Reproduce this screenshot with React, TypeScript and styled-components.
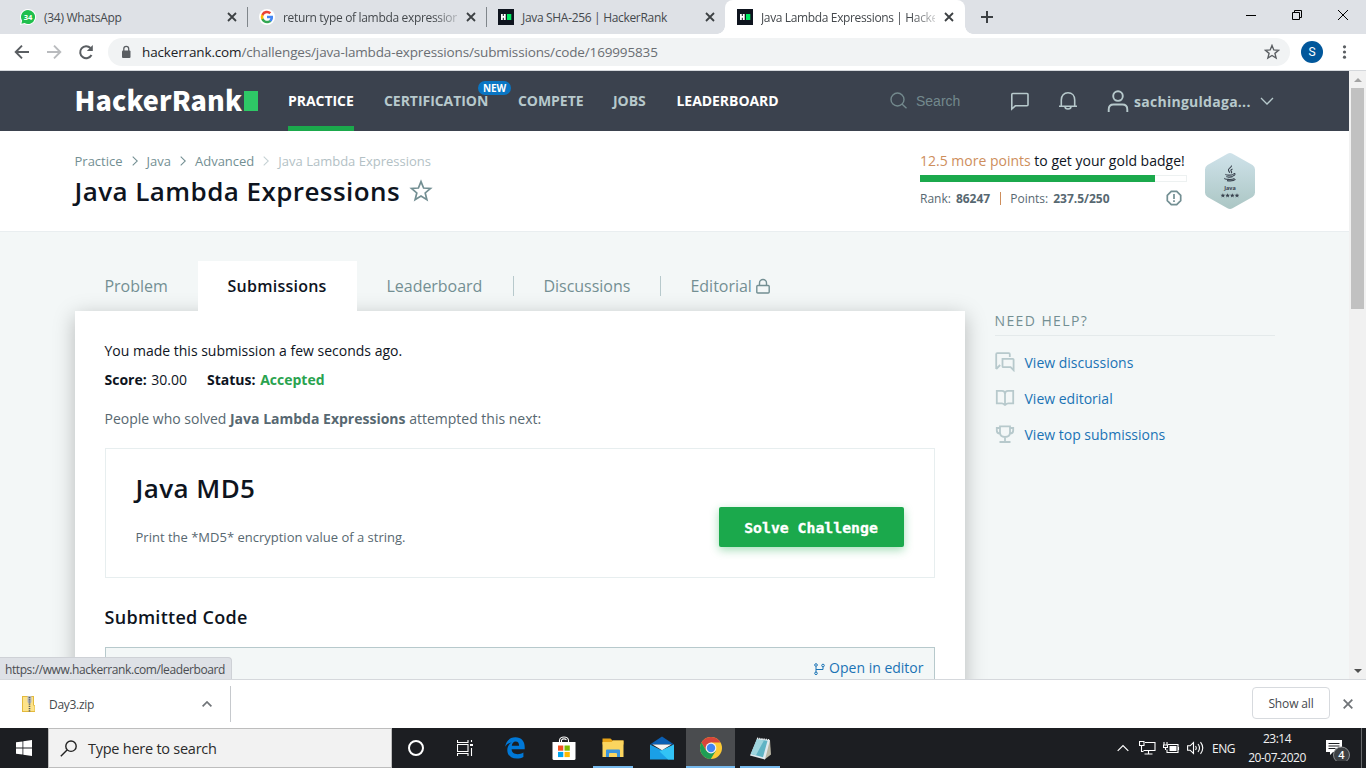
import React from "react";
import styled, { createGlobalStyle } from "styled-components";

const Global = createGlobalStyle`
  * { box-sizing: border-box; }
  body { margin: 0; overflow: hidden; font-family: "Open Sans", "Noto Sans", sans-serif; }
  svg { display: block; flex: none; }
`;

const Window = styled.div`
  width: 1366px;
  height: 768px;
  display: flex;
  flex-direction: column;
  overflow: hidden;
  background: #fff;
`;

const Txt = styled.span<{ $s?: number; $ls?: number; $w?: number; $c?: string }>`
  font-size: ${(p) => p.$s ?? 14}px;
  letter-spacing: ${(p) => p.$ls ?? 0}px;
  font-weight: ${(p) => p.$w ?? 400};
  color: ${(p) => p.$c ?? "inherit"};
  white-space: nowrap;
`;

/* ---------- browser chrome ---------- */

const TabStrip = styled.div`
  height: 34px;
  flex: none;
  display: flex;
  padding-left: 8px;
  background: #dee1e6;
`;

const BrowserTab = styled.div<{ $active?: boolean; $line?: boolean }>`
  position: relative;
  width: ${(p) => (p.$active ? 240 : 239)}px;
  height: 34px;
  display: flex;
  align-items: center;
  gap: 8px;
  padding: 0 ${(p) => (p.$active ? 8 : 7)}px 0 12px;
  color: #45494d;
  background: ${(p) => (p.$active ? "#fff" : "transparent")};
  border-radius: 8px 8px 0 0;
  &::before, &::after {
    content: "";
    display: ${(p) => (p.$active ? "block" : "none")};
    position: absolute;
    bottom: 0;
    width: 8px;
    height: 8px;
  }
  &::before { left: -8px; background: radial-gradient(circle at 0 0, #dee1e6 7.5px, #fff 8px); }
  &::after {
    right: ${(p) => (p.$line ? -1 : -8)}px;
    bottom: ${(p) => (p.$line ? 7 : 0)}px;
    display: ${(p) => (p.$active || p.$line ? "block" : "none")};
    width: ${(p) => (p.$line ? 1 : 8)}px;
    height: ${(p) => (p.$line ? 20 : 8)}px;
    background: ${(p) => (p.$line ? "#80868b" : "radial-gradient(circle at 100% 0, #dee1e6 7.5px, #fff 8px)")};
  }
`;

const TabTitle = styled.div<{ $fade?: boolean }>`
  flex: 1;
  min-width: 0;
  line-height: 18px;
  margin-right: -2px;
  ${(p) => p.$fade && "mask-image: linear-gradient(90deg, #000 150px, transparent 182px);"}
`;

const NewTab = styled.div`
  width: 28px;
  margin-left: 8px;
  display: flex;
  align-items: center;
  justify-content: center;
`;

const WinControls = styled.div`
  margin-left: auto;
  height: 29px;
  display: flex;
`;

const WinButton = styled.div`
  width: 46px;
  display: flex;
  align-items: center;
  justify-content: center;
`;

const Toolbar = styled.div`
  height: 37px;
  flex: none;
  display: flex;
  align-items: center;
  padding: 0 12px 0 14px;
  border-bottom: 1px solid #d5d8dc;
  background: #fff;
`;

const NavButtons = styled.div`
  display: flex;
  gap: 16px;
  width: 94px;
`;

const Omnibox = styled.div`
  width: 1182px;
  height: 28px;
  display: flex;
  align-items: center;
  padding: 0 10px 0 10px;
  border-radius: 14px;
  background: #f1f3f4;
  color: #6a6e73;
  b { font-weight: 400; color: #202124; }
`;

const UrlText = styled.div`
  flex: 1;
  margin-left: 8px;
  font-size: 13.5px;
  letter-spacing: -0.145px;
`;

const Avatar = styled.div`
  width: 22px;
  height: 22px;
  margin: 0 11px;
  border-radius: 50%;
  background: #01579b;
  color: #fff;
  font: 12px/22px Roboto, sans-serif;
  text-align: center;
`;

const Content = styled.div`
  position: relative;
  height: 608px;
  flex: none;
  display: flex;
  overflow: hidden;
`;

const Page = styled.div`
  width: 1349px;
  background: #f3f7f7;
  overflow: hidden;
`;

const Scrollbar = styled.div`
  width: 17px;
  display: flex;
  flex-direction: column;
  align-items: center;
  background: #f1f1f1;
`;

const ScrollArrow = styled.div`
  height: 17px;
  display: flex;
  align-items: center;
`;

const ScrollTrack = styled.div`
  flex: 1;
`;

const Thumb = styled.div`
  width: 13px;
  height: 221px;
  background: #c1c1c1;
`;

const StatusBubble = styled.div`
  position: absolute;
  left: -1px;
  bottom: 0;
  width: 233px;
  height: 22px;
  padding-left: 5px;
  line-height: 21px;
  background: #dee1e6;
  border: 1px solid #ced1d6;
  border-bottom: 0;
  border-radius: 0 4px 0 0;
  color: #4a4d51;
`;

/* ---------- site header ---------- */

const SiteNav = styled.div`
  height: 60px;
  display: flex;
  align-items: stretch;
  padding: 0 75px 0 74.5px;
  background: #3b424e;
`;

const Logo = styled.div`
  width: 213.5px;
  display: flex;
  align-items: center;
  color: #fff;
  font: 900 27px/30px "Noto Sans CJK SC", "Open Sans", sans-serif;
  letter-spacing: 0.1px;
`;

const LogoWord = styled.div`
  width: 169.5px;
  padding-bottom: 2px;
  white-space: nowrap;
`;

const LogoBlock = styled.div`
  width: 14px;
  height: 20px;
  background: #2ec866;
`;

const NavLink = styled.div<{ $on?: boolean; $current?: boolean; $w: number }>`
  position: relative;
  width: ${(p) => p.$w}px;
  margin-right: 30px;
  line-height: 60px;
  font-size: 14px;
  font-weight: 700;
  letter-spacing: -0.05px;
  white-space: nowrap;
  color: ${(p) => (p.$on ? "#fff" : "#b7c9cc")};
  box-shadow: ${(p) => (p.$current ? "inset 0 -5px #1ba94c" : "none")};
`;

const NewBadge = styled.span`
  position: absolute;
  right: -23px;
  top: 10px;
  width: 33px;
  height: 14px;
  border-radius: 7px;
  background: #0a76c4;
  color: #fff;
  font-size: 10px;
  font-weight: 700;
  line-height: 14px;
  text-align: center;
`;

const NavRight = styled.div`
  margin-left: auto;
  display: flex;
  align-items: center;
  color: #b7c9cc;
`;

const SearchBox = styled.div`
  width: 120px;
  display: flex;
  align-items: center;
  gap: 9px;
  color: #73898d;
  font: 14px "Liberation Sans", sans-serif;
  svg { margin-top: -2px; }
`;

const NavIcon = styled.div<{ $w: number }>`
  width: ${(p) => p.$w}px;
`;

const UserName = styled.div`
  width: 126px;
  margin-left: 5px;
  font-size: 14px;
  font-weight: 700;
  letter-spacing: 0.27px;
`;

const TitleBar = styled.div`
  height: 100px;
  display: flex;
  justify-content: space-between;
  padding: 0 94px 0 74.5px;
  background: #fff;
  box-shadow: 0 1px 0 #e9eef0;
`;

const TitleBlock = styled.div`
  padding-top: 20px;
`;

const Crumbs = styled.div`
  height: 20px;
  display: flex;
  align-items: center;
  font-size: 13px;
  color: #738f93;
  svg { margin: 0 9px; }
`;

const TitleRow = styled.div`
  display: flex;
  align-items: center;
  gap: 9px;
  height: 40px;
  color: #0e141e;
`;

const Progress = styled.div`
  display: flex;
  gap: 18px;
  padding-top: 19px;
`;

const ProgressInfo = styled.div`
  width: 267px;
`;

const ProgressText = styled.div`
  height: 20px;
  line-height: 20px;
  color: #0e141e;
`;

const Bar = styled.div`
  height: 7px;
  margin-top: 5px;
  border: 1px solid #edf1f1;
  background: #fff;
`;

const BarFill = styled.div`
  width: 235px;
  height: 7px;
  margin: -1px 0 0 -1px;
  background: #1ba94c;
`;

const Stats = styled.div`
  height: 20px;
  margin-top: 6px;
  display: flex;
  align-items: center;
  font-size: 12px;
  color: #576871;
  b { margin-left: 5px; }
  i { width: 1px; height: 13px; margin: 0 9px 0 10px; background: #ce8e5c; }
  svg { margin: 0 5px 0 auto; }
`;

const Hex = styled.div`
  margin-top: 3px;
  width: 50px;
  height: 56px;
`;

/* ---------- main ---------- */

const Main = styled.div`
  display: flex;
  gap: 30px;
  padding: 30px 74px 0 74.5px;
`;

const Left = styled.div`
  width: 890px;
`;

const PageTabs = styled.div`
  position: relative;
  z-index: 1;
  height: 50px;
  display: flex;
  align-items: center;
`;

const PageTab = styled.div<{ $w: number; $active?: boolean; $line?: boolean }>`
  width: ${(p) => p.$w}px;
  height: ${(p) => (p.$active ? 50 : 20)}px;
  display: flex;
  align-items: center;
  gap: 4px;
  padding-left: 30px;
  border-right: ${(p) => (p.$line ? "1px solid #b7c9cc" : "0")};
  background: ${(p) => (p.$active ? "#fff" : "transparent")};
  font-size: 16px;
  font-weight: ${(p) => (p.$active ? 600 : 400)};
  letter-spacing: ${(p) => (p.$active ? 0.25 : -0.03)}px;
  color: ${(p) => (p.$active ? "#0e141e" : "#738f93")};
`;

const Card = styled.div`
  height: 500px;
  padding: 30px;
  background: #fff;
  box-shadow: 0 5px 20px rgba(0, 0, 0, 0.25);
  color: #0e141e;
`;

const Line = styled.div<{ $mt?: number; $c?: string }>`
  height: 20px;
  margin-top: ${(p) => p.$mt ?? 0}px;
  line-height: 20px;
  font-size: 14px;
  white-space: nowrap;
  color: ${(p) => p.$c ?? "inherit"};
  b { font-weight: 700; }
`;

const Field = styled.span`
  margin-right: 20px;
  b { margin-right: 1px; }
`;

const Green = styled.b`
  color: #2aa34f;
`;

const NextBox = styled.div`
  height: 130px;
  margin-top: 19px;
  display: flex;
  justify-content: space-between;
  align-items: flex-start;
  padding: 19px 30px 0 30px;
  border: 1px solid #e7eeef;
`;

const NextTitle = styled.div`
  height: 40px;
  line-height: 40px;
`;

const NextDesc = styled.div`
  margin-top: 19px;
  line-height: 20px;
  font-size: 13px;
  color: #576871;
`;

const SolveButton = styled.div`
  width: 185px;
  height: 40px;
  margin-top: 39px;
  border-radius: 2px;
  background: #1ba94c;
  box-shadow: 0 3px 10px rgba(27, 169, 76, 0.4);
  color: #fff;
  font: 700 14.8px/41px "DejaVu Sans Mono", monospace;
  -webkit-text-stroke: 0.3px #fff;
  text-align: center;
`;

const SectionTitle = styled.div`
  height: 30px;
  margin-top: 24px;
  line-height: 30px;
  font-size: 18px;
  font-weight: 600;
  letter-spacing: 0.28px;
`;

const CodeBox = styled.div`
  height: 120px;
  margin-top: 15px;
  padding: 10px 10px;
  display: flex;
  justify-content: flex-end;
  gap: 4px;
  border: 1px solid #b7c9cc;
  background: #f3f7f7;
  color: #1a73b5;
  line-height: 20px;
  font-size: 14px;
  svg { margin-top: 5px; }
`;

const Side = styled.div`
  width: 280px;
  padding-top: 50px;
`;

const SideTitle = styled.div`
  height: 25px;
  line-height: 20px;
  border-bottom: 1px solid #e4eaeb;
  font-size: 14px;
  letter-spacing: 1.4px;
  color: #738f93;
`;

const SideLinks = styled.div`
  padding-top: 16px;
  display: flex;
  flex-direction: column;
  gap: 16px;
`;

const SideLink = styled.div`
  height: 20px;
  display: flex;
  align-items: center;
  gap: 10px;
  font-size: 14px;
  color: #1a73b5;
  svg { color: #b7c9cc; }
`;

/* ---------- downloads + taskbar ---------- */

const Downloads = styled.div`
  height: 49px;
  flex: none;
  display: flex;
  align-items: center;
  padding: 0 13px 0 22px;
  border-top: 1px solid #d5d8dc;
  background: #fff;
  color: #45494d;
`;

const DownloadItem = styled.div`
  width: 209px;
  height: 36px;
  display: flex;
  align-items: center;
  gap: 14px;
  border-right: 1px solid #c6c9cd;
  svg:last-child { margin: 0 18px 0 auto; }
`;

const ShowAll = styled.div`
  width: 78px;
  height: 32px;
  margin: -2px 13px 0 auto;
  border: 1px solid #d7dade;
  border-radius: 4px;
  line-height: 29px;
  text-align: center;
`;

const Taskbar = styled.div`
  height: 40px;
  flex: none;
  display: flex;
  background: #1c1e22;
  color: #f2f2f2;
`;

const TaskButton = styled.div<{ $w?: number; $bar?: number; $hot?: boolean }>`
  width: ${(p) => p.$w ?? 49}px;
  height: 40px;
  display: flex;
  align-items: center;
  justify-content: center;
  background: ${(p) => (p.$hot ? "#4a4c4f" : "transparent")};
  background-image: ${(p) => (p.$bar ? "linear-gradient(#76b9ed, #76b9ed)" : "none")};
  background-size: ${(p) => p.$bar ?? 0}px 2px;
  background-repeat: no-repeat;
  background-position: center bottom;
`;

const TaskSearch = styled.div`
  width: 344px;
  height: 40px;
  display: flex;
  align-items: center;
  gap: 11px;
  padding-left: 11px;
  border: 1px solid #bdbdbd;
  background: #f2f2f2;
  color: #2b2b2b;
`;

const Tray = styled.div`
  margin-left: auto;
  display: flex;
  align-items: center;
  padding-right: 4px;
`;

const TraySlot = styled.div<{ $w: number; $pr?: number }>`
  width: ${(p) => p.$w}px;
  height: 40px;
  padding-right: ${(p) => p.$pr ?? 0}px;
  display: flex;
  align-items: center;
  justify-content: center;
`;

const Clock = styled.div`
  width: 76px;
  text-align: center;
  line-height: 19px;
  font-size: 12px;
  letter-spacing: -0.5px;
`;

const ShowDesktop = styled.div`
  width: 1px;
  height: 40px;
  background: #67696c;
`;

/* ---------- icons ---------- */

const Stroke = ({ w, h = w, vb, d, c = "currentColor", sw = 1.5 }: { w: number; h?: number; vb: string; d: string; c?: string; sw?: number }) => (
  <svg width={w} height={h} viewBox={vb} fill="none" stroke={c} strokeWidth={sw}>
    <path d={d} />
  </svg>
);

const Close = ({ c = "#3c4043", s = 16 }: { c?: string; s?: number }) => (
  <Stroke w={s} vb="0 0 16 16" d="M4 4l8 8M12 4l-8 8" c={c} sw={1.8} />
);

const HrIcon = () => (
  <svg width="16" height="16" viewBox="0 0 16 16">
    <rect width="16" height="16" fill="#0e141e" />
    <path d="M3 5h1.800v2h1V5h1.900v6H5.800V8.800h-1V11H3z" fill="#fff" />
    <rect x="9" y="5" width="4.300" height="6" fill="#00ea64" />
  </svg>
);

const WhatsAppIcon = () => (
  <svg width="16" height="16" viewBox="0 0 16 16">
    <path d="M8 0a8 8 0 1 1-3.600 15.100L0 16l1-4.200A8 8 0 0 1 8 0z" fill="#fff" />
    <path d="M8 1a7 7 0 1 1-3.400 13.100L1.400 14.700l.7-3A7 7 0 0 1 8 1z" fill="#1fbf4d" />
    <text x="8" y="10.800" fontSize="7.500" fontWeight="700" textAnchor="middle" fill="#fff" fontFamily="Open Sans">34</text>
  </svg>
);

const GoogleIcon = () => (
  <svg width="16" height="16" viewBox="-2 -2 28 28">
    <circle cx="12" cy="12" r="14" fill="#fff" />
    <path fill="#4285F4" d="M22.560 12.250c0-.78-.07-1.530-.2-2.250H12v4.260h5.920a5.060 5.060 0 0 1-2.200 3.320v2.770h3.570c2.080-1.920 3.270-4.740 3.270-8.100z" />
    <path fill="#34A853" d="M12 23c2.970 0 5.460-.98 7.280-2.660l-3.570-2.770c-.98.66-2.230 1.060-3.710 1.060-2.860 0-5.290-1.930-6.160-4.530H2.180v2.840A11 11 0 0 0 12 23z" />
    <path fill="#FBBC05" d="M5.840 14.090a6.600 6.600 0 0 1 0-4.180V7.070H2.180a11 11 0 0 0 0 9.860z" />
    <path fill="#EA4335" d="M12 5.380c1.620 0 3.060.56 4.210 1.640l3.150-3.150A11 11 0 0 0 2.180 7.070l3.660 2.840C6.710 7.310 9.140 5.380 12 5.380z" />
  </svg>
);

const StarPath = "M12 2.600L14.600 9.040L21.500 9.500L16.200 13.960L17.900 20.700L12 17L6.100 20.700L7.800 13.960L2.500 9.500L9.400 9.040z";

const ChevronRight = ({ c = "#738f93" }: { c?: string }) => <Stroke w={6} h={10} vb="0 0 6 10" d="M.7.700L5.300 5 .700 9.300" c={c} sw={1.1} />;

const JavaBadge = () => (
  <svg width="50" height="56" viewBox="0 0 50 56">
    <defs>
      <linearGradient id="hex" x1="0" y1="0" x2="0" y2="1">
        <stop offset="0" stopColor="#cfe2ea" />
        <stop offset="1" stopColor="#abc6c4" />
      </linearGradient>
    </defs>
    <path d="M22.500.800q2.500-1.400 5 0L47.500 12Q50 13.500 50 16.500v23q0 3-2.500 4.500L27.500 55.200q-2.500 1.400-5 0L2.500 44Q0 42.500 0 39.500v-23Q0 13.500 2.500 12z" fill="url(#hex)" />
    <g fill="none" stroke="#39424e" strokeWidth="1.100">
      <path d="M26.500 12.500c.5 2-4 3-3 5 .3.900 1.200 1.200 1 2.400M27.500 16c-2 .8-2 1.600-1 2.600.4.600 0 1.200-.5 1.500M21 21.300c-1.500.9 5 1.200 7.500.1M28.500 20.600c2-.6 2.200 1.500-.5 2.400M21.800 23.200c-.5 1.100 4 1.200 6 .4M20 25.300c-1.800 1 7 1.900 9.500.2M22 27.600c3 .5 7 .1 8.500-1.200" />
    </g>
    <text x="25" y="36.500" fontSize="5.500" fontWeight="700" textAnchor="middle" fill="#39424e" fontFamily="Open Sans">Java</text>
    {[17.9, 22.6, 27.3, 32].map((x) => (
      <path key={x} transform={`translate(${x} 42.500)`} d="M0-2.300l.65 1.500 1.600.1-1.200 1.100.4 1.600L0 1.100-1.450 2l.4-1.600L-2.250-.7l1.600-.1z" fill="#39424e" />
    ))}
  </svg>
);

const ZipIcon = () => (
  <svg width="13" height="16" viewBox="0 0 13 16">
    <path d="M0 0h12v9h1v7H0z" fill="#e3b93c" />
    <path d="M1 1h10v14H1z" fill="#fde38a" />
    <path d="M5.500 0h4v6l-1 1.500h-2L5.500 6z" fill="#b9bcc0" />
    <path d="M7.500 1v15" stroke="#55595e" strokeWidth="1.600" strokeDasharray="1.200 1" />
    <path d="M11 9.500h1.500v5.500H11z" fill="#fde38a" />
  </svg>
);

const EdgeIcon = () => (
  <svg width="20" height="22" viewBox="0 0 20 22">
    <path fill="#0078d7" d="M.2 9.800C1 4.200 4.700.300 10.400.300c6 0 9.300 4.200 9.300 9.600v2.400H6.600c.2 3.300 2.700 4.900 6 4.900 2.200 0 4.200-.6 5.800-1.600v4.500c-1.900 1-4.200 1.500-6.600 1.500-5.800 0-9.500-3.300-9.500-8.700 0-3.400 1.900-6.100 4.700-7.700C3.600 5.900 1.600 7.400.200 9.800zM6.800 8.700h7.300c0-2.500-1.200-4.100-3.400-4.100S7.100 6.300 6.800 8.700z" />
  </svg>
);

const StoreIcon = () => (
  <svg width="24" height="25" viewBox="0 0 24 25">
    <path d="M7.500 7V4.500a4.500 3.500 0 0 1 9 0V7M9.500 7V4a3.400 3.400 0 0 1 5 0" fill="none" stroke="#fff" strokeWidth="1.100" />
    <path d="M.5 6h23v16.500a1.500 1.500 0 0 1-1.500 1.500H2a1.500 1.500 0 0 1-1.500-1.500z" fill="#fff" />
    <path d="M6 9.500h5.300v5.200H6z" fill="#f25022" />
    <path d="M12.500 9.500h5.300v5.200h-5.300z" fill="#7fba00" />
    <path d="M6 15.900h5.300v5.200H6z" fill="#00a4ef" />
    <path d="M12.500 15.900h5.300v5.200h-5.300z" fill="#ffb900" />
  </svg>
);

const ExplorerIcon = () => (
  <svg width="22" height="20" viewBox="0 0 22 20">
    <path d="M.5.500h8l2 2h11v4H.500z" fill="#e8a317" />
    <path d="M.5 4h9l1.500-1.500h10.500v16.500H.500z" fill="#fbd55f" />
    <path d="M4 19v-6.500q0-1 1-1h12q1 0 1 1V19h-3v-3q0-1-1-1H8q-1 0-1 1v3z" fill="#3a94dc" />
  </svg>
);

const MailIcon = () => (
  <svg width="24" height="24" viewBox="0 0 24 24">
    <path d="M0 8.500L12 .5l12 8z" fill="#0a5fb4" />
    <path d="M0 8.500l12 6L24 8.500V23.500H0z" fill="#1a9fe6" />
    <path d="M24 8.500v15H18L9.500 15.500z" fill="#32c3f5" />
    <path d="M2.500 8.500h19L12 14.300z" fill="#f5f5f5" />
  </svg>
);

const ChromeIcon = () => (
  <svg width="22" height="22" viewBox="0 0 22 22">
    <circle cx="11" cy="11" r="11" fill="#fcc934" />
    <path d="M1.470 5.500A11 11 0 0 1 20.530 5.500H11L6.200 13.700z" fill="#d8453a" />
    <path d="M1.470 5.500A11 11 0 0 0 10.800 22L15.800 13.700H6.200z" fill="#1e9d55" />
    <circle cx="11" cy="11" r="5.400" fill="#f1f1f1" />
    <circle cx="11" cy="11" r="4.200" fill="#4285f4" />
  </svg>
);

const NotepadIcon = () => (
  <svg width="23" height="23" viewBox="0 0 23 23">
    <path d="M8 2.500L21 3.500l1 14-6.500 5z" fill="#b9b6a4" />
    <path d="M8 1.500l13 1.500-5 19.500L1 18.500z" fill="#dfe9ee" />
    <path d="M8 2.500l10.500 1.200-4.500 16.500L2 17z" fill="#5fb3c4" />
    <path d="M8 2.500l7 .8L7 18.300 2 17z" fill="#9fd5de" />
    <path d="M8 1.300l13 1.600" stroke="#e9eef0" strokeWidth="1.500" strokeDasharray="1.200 1" />
  </svg>
);

/* ---------- data ---------- */

const browserTabs = [
  { title: "(34) WhatsApp", icon: <WhatsAppIcon />, line: true, ls: -0.28 },
  { title: "return type of lambda expression", icon: <GoogleIcon />, line: true, fade: true, ls: -0.33 },
  { title: "Java SHA-256 | HackerRank", icon: <HrIcon />, ls: -0.32 },
  { title: "Java Lambda Expressions | Hacke", icon: <HrIcon />, active: true, fade: true, ls: -0.36 },
];

export default function App() {
  return (
    <Window>
      <Global />
      <TabStrip>
        {browserTabs.map((t) => (
          <BrowserTab key={t.title} $active={t.active} $line={t.line}>
            {t.icon}
            <TabTitle $fade={t.fade}>
              <Txt $s={12} $ls={t.ls}>{t.title}</Txt>
            </TabTitle>
            <Close />
          </BrowserTab>
        ))}
        <NewTab><Stroke w={14} vb="0 0 14 14" d="M7 1v12M1 7h12" c="#3c4043" sw={2} /></NewTab>
        <WinControls>
          <WinButton><Stroke w={10} vb="0 0 10 10" d="M0 5.500h10" c="#000" sw={1} /></WinButton>
          <WinButton><Stroke w={10} vb="0 0 10 10" d="M.5 2.500h7v7h-7zM2.500 2.500v-2h7v7h-2" c="#000" sw={1} /></WinButton>
          <WinButton><Stroke w={10} vb="0 0 10 10" d="M0 0l10 10M10 0L0 10" c="#000" sw={1} /></WinButton>
        </WinControls>
      </TabStrip>

      <Toolbar>
        <NavButtons>
          <Stroke w={16} vb="0 0 16 16" d="M15 8H2.500M8 1.700L1.700 8 8 14.300" c="#5a5e62" sw={1.9} />
          <Stroke w={16} vb="0 0 16 16" d="M1 8h12.500M8 1.700L14.300 8 8 14.300" c="#b9bbbe" sw={1.9} />
          <svg width="16" height="16" viewBox="0 0 16 16">
            <path d="M13.500 11A6 6 0 1 1 12.500 4" fill="none" stroke="#5a5e62" strokeWidth="2" />
            <path d="M14.800 1v6h-6z" fill="#5a5e62" />
          </svg>
        </NavButtons>
        <Omnibox>
          <svg width="16" height="16" viewBox="0 0 16 16">
            <rect x="4" y="6.500" width="8.500" height="7.500" rx="1" fill="#5a5e62" />
            <path d="M5.800 7V4.800a2.450 2.450 0 0 1 4.900 0V7" fill="none" stroke="#5a5e62" strokeWidth="1.300" />
          </svg>
          <UrlText><b>hackerrank.com</b>/challenges/java-lambda-expressions/submissions/code/169995835</UrlText>
          <Stroke w={16} vb="0.500 0.500 23 23" d={StarPath} c="#5a5e62" sw={2} />
        </Omnibox>
        <Avatar>S</Avatar>
        <svg width="20" height="16" viewBox="0 0 20 16" fill="#5a5e62">
          <circle cx="10.500" cy="2.800" r="1.600" /><circle cx="10.500" cy="8" r="1.600" /><circle cx="10.500" cy="13.200" r="1.600" />
        </svg>
      </Toolbar>

      <Content>
        <Page>
          <SiteNav>
            <Logo><LogoWord>HackerRank</LogoWord><LogoBlock /></Logo>
            <NavLink $w={66} $on $current>PRACTICE</NavLink>
            <NavLink $w={104}>CERTIFICATION<NewBadge>NEW</NewBadge></NavLink>
            <NavLink $w={65}>COMPETE</NavLink>
            <NavLink $w={33.5}>JOBS</NavLink>
            <NavLink $w={102} $on>LEADERBOARD</NavLink>
            <NavRight>
              <SearchBox>
                <Stroke w={17} vb="0 0 17 17" d="M7.500 1a6.500 6.500 0 1 0 0 13a6.500 6.500 0 0 0 0-13zM12.200 12.200l4.300 4" sw={1.4} />
                Search
              </SearchBox>
              <NavIcon $w={48}>
                <Stroke w={20} vb="0 0 20 20" d="M1.800 18V3.500q0-1 1-1H17q1 0 1 1v10.300q0 1-1 1H5.300z" sw={1.6} />
              </NavIcon>
              <NavIcon $w={49}>
                <Stroke w={20} vb="0 0 20 20" d="M1 15.200h18M3.300 15V9C3.300 4.600 6 1.800 10 1.800S16.700 4.600 16.700 9v6M7 15.500c0 3.300 6 3.300 6 0" sw={1.6} />
              </NavIcon>
              <Stroke w={22} h={24} vb="0 0 22 24" d="M11 2.300a4.800 4.800 0 1 0 0 9.600a4.800 4.800 0 0 0 0-9.600zM1.700 23v-2.500q0-5 5-5h8.600q5 0 5 5V23" sw={1.9} />
              <UserName>sachinguldaga...</UserName>
              <Stroke w={14} h={8} vb="0 0 14 8" d="M1 1l6 6 6-6" sw={1.3} />
            </NavRight>
          </SiteNav>

          <TitleBar>
            <TitleBlock>
              <Crumbs>
                Practice<ChevronRight />Java<ChevronRight />Advanced<ChevronRight c="#c5d1d4" />
                <Txt $s={13} $c="#b3c1c5">Java Lambda Expressions</Txt>
              </Crumbs>
              <TitleRow>
                <Txt $s={26} $w={600} $ls={0.43}>Java Lambda Expressions</Txt>
                <Stroke w={24} vb="0 0 24 24" d={StarPath} c="#738f93" sw={1.7} />
              </TitleRow>
            </TitleBlock>
            <Progress>
              <ProgressInfo>
                <ProgressText>
                  <Txt $s={14} $c="#ce8e5c">12.5 more points</Txt>
                  <Txt $s={14}> to get your gold badge!</Txt>
                </ProgressText>
                <Bar><BarFill /></Bar>
                <Stats>
                  Rank: <b>86247</b><i />Points: <b>237.5/250</b>
                  <Stroke w={16} vb="0 0 16 16" d="M5.300 1.300h5.400l4 4v5.400l-4 4H5.300l-4-4V5.300zM8 4v5M8 10.300v1.800" c="#738f93" sw={1.7} />
                </Stats>
              </ProgressInfo>
              <Hex><JavaBadge /></Hex>
            </Progress>
          </TitleBar>

          <Main>
            <Left>
              <PageTabs>
                <PageTab $w={123}>Problem</PageTab>
                <PageTab $w={159} $active>Submissions</PageTab>
                <PageTab $w={157} $line>Leaderboard</PageTab>
                <PageTab $w={147} $line>Discussions</PageTab>
                <PageTab $w={140}>
                  Editorial
                  <Stroke w={14} h={16} vb="0 0 14 16" d="M.8 8.500q0-1 1-1h10.400q1 0 1 1v5.500q0 1-1 1H1.800q-1 0-1-1zM3.500 7.500V5a3.500 3.500 0 0 1 7 0V7.500" sw={1.4} />
                </PageTab>
              </PageTabs>
              <Card>
                <Line>You made this submission a few seconds ago.</Line>
                <Line $mt={9}>
                  <Field><b>Score:</b> 30.00</Field>
                  <Field><b>Status:</b> <Green>Accepted</Green></Field>
                </Line>
                <Line $mt={19} $c="#576871">People who solved <b>Java Lambda Expressions</b> attempted this next:</Line>
                <NextBox>
                  <div>
                    <NextTitle><Txt $s={26} $w={600} $ls={0.43}>Java MD5</Txt></NextTitle>
                    <NextDesc>Print the *MD5* encryption value of a string.</NextDesc>
                  </div>
                  <SolveButton>Solve Challenge</SolveButton>
                </NextBox>
                <SectionTitle>Submitted Code</SectionTitle>
                <CodeBox>
                  <Stroke w={11} h={12} vb="0 0 11 12" d="M2 3.500v6M2 .7a1.300 1.300 0 1 0 0 2.600a1.300 1.300 0 0 0 0-2.600zM2 9a1.300 1.300 0 1 0 0 2.600a1.300 1.300 0 0 0 0-2.600zM9 1.200a1.300 1.300 0 1 0 0 2.600a1.300 1.300 0 0 0 0-2.600zM9 4v2.500H2" sw={1} />
                  Open in editor
                </CodeBox>
              </Card>
            </Left>
            <Side>
              <SideTitle>NEED HELP?</SideTitle>
              <SideLinks>
                <SideLink>
                  <Stroke w={20} vb="0 0 20 20" d="M1.200 17V2.200q0-1 1-1h11.600q1 0 1 1V5M1.200 17l4-4M7.500 6.800h10.300q.8 0 .8.800v10.600l-3-3H8.300q-.8 0-.8-.8z" sw={1.8} />
                  View discussions
                </SideLink>
                <SideLink>
                  <Stroke w={20} vb="0 0 20 20" d="M10 17.500q-1-2.200-3-2.200H1.800V2.800H7q3 0 3 3.200zq1-2.200 3-2.200h5.200V2.800H13q-3 0-3 3.200" sw={1.8} />
                  View editorial
                </SideLink>
                <SideLink>
                  <Stroke w={20} vb="0 0 20 20" d="M5 2.300h10v6.200q0 4.500-5 4.500T5 8.500zM5 4H1.800v2.500Q1.800 9.500 5 9.500M15 4h3.200v2.500q0 3-3.200 3M10 13v5M4.500 18h11" sw={1.8} />
                  View top submissions
                </SideLink>
              </SideLinks>
            </Side>
          </Main>
        </Page>
        <Scrollbar>
          <ScrollArrow><svg width="8" height="4" viewBox="0 0 8 4"><path d="M0 4l4-4 4 4z" fill="#a3a3a3" /></svg></ScrollArrow>
          <ScrollTrack><Thumb /></ScrollTrack>
          <ScrollArrow><svg width="8" height="4" viewBox="0 0 8 4"><path d="M0 0l4 4 4-4z" fill="#505050" /></svg></ScrollArrow>
        </Scrollbar>
        <StatusBubble><Txt $s={12} $ls={-0.41}>https://www.hackerrank.com/leaderboard</Txt></StatusBubble>
      </Content>

      <Downloads>
        <DownloadItem>
          <ZipIcon />
          <Txt $s={12} $ls={-0.3}>Day3.zip</Txt>
          <Stroke w={10} h={6} vb="0 0 10 6" d="M.6 5.400L5 1l4.400 4.400" c="#707478" sw={1.7} />
        </DownloadItem>
        <ShowAll><Txt $s={12} $ls={-0.15} $w={500}>Show all</Txt></ShowAll>
        <Stroke w={10} vb="0 0 10 10" d="M.7.700l8.600 8.600M9.300.700L.700 9.300" c="#707478" sw={1.8} />
      </Downloads>

      <Taskbar>
        <TaskButton $w={48}>
          <svg width="16" height="16" viewBox="0 0 16 16"><path d="M0 2.300l6.500-.9v6.200H0zM7.300 1.300L16 0v7.600H7.300zM0 8.400h6.500v6.200L0 13.700zM7.300 8.400H16V16l-8.700-1.300z" fill="#fff" /></svg>
        </TaskButton>
        <TaskSearch>
          <Stroke w={17} vb="0 0 17 17" d="M11 1a5.200 5.200 0 1 0 0 10.400a5.200 5.200 0 0 0 0-10.400zM7.300 9.800L.800 16.300" c="#222" sw={1.4} />
          <Txt $s={14.5} $ls={-0.25}>Type here to search</Txt>
        </TaskSearch>
        <TaskButton $w={48}><svg width="18" height="18"><circle cx="9" cy="9" r="7" fill="none" stroke="#fff" strokeWidth="2" /></svg></TaskButton>
        <TaskButton $w={50}>
          <Stroke w={17} h={16} vb="0 0 17 16" d="M.5 0v2.500h10.500V0M.5 4.500H11v7H.5zM.5 16v-2.500H11V16M14.500 0v2M14.500 8v8M13 5.500h3M13 4.500h3" c="#fff" sw={1.1} />
        </TaskButton>
        <TaskButton><EdgeIcon /></TaskButton>
        <TaskButton><StoreIcon /></TaskButton>
        <TaskButton $bar={40}><ExplorerIcon /></TaskButton>
        <TaskButton><MailIcon /></TaskButton>
        <TaskButton $w={49} $bar={49} $hot><ChromeIcon /></TaskButton>
        <TaskButton $w={50} $bar={40}><NotepadIcon /></TaskButton>
        <Tray>
          <TraySlot $w={24}><Stroke w={12} h={8} vb="0 0 12 8" d="M.7 6.800L6 1.500l5.300 5.300" c="#fff" sw={1.2} /></TraySlot>
          <TraySlot $w={24}><Stroke w={17} h={14} vb="0 0 17 14" d="M6 1.500h10v8H4.500M.5.500H5v4H.5zM2.500 4.500v6h2M9.500 9.500v3.500M5.500 13h8" c="#fff" sw={1.1} /></TraySlot>
          <TraySlot $w={24}>
            <svg width="17" height="12" viewBox="0 0 17 12">
              <path d="M5 2.500h10v8H4v-3M15.500 5v3M1 0v2.500M4 0v2.500M.5 3h4v2.500h-4zM2.500 5.500V8" fill="none" stroke="#fff" strokeWidth="1.100" />
              <path d="M6.500 4h7v5h-7z" fill="#fff" />
            </svg>
          </TraySlot>
          <TraySlot $w={25}><Stroke w={17} h={14} vb="0 0 17 14" d="M.6 4.800h2.500L6.500 1.500v11L3.100 9.200H.600zM8.500 5q1.500 2 0 4M11 3q3 4 0 8M13.500 1.200q4.500 5.800 0 11.600" c="#fff" sw={1.1} /></TraySlot>
          <TraySlot $w={31}><Txt $s={12} $ls={-0.5}>ENG</Txt></TraySlot>
          <Clock>23:14<br />20-07-2020</Clock>
          <TraySlot $w={46} $pr={3}>
            <svg width="26" height="26" viewBox="0 0 26 26">
              <path d="M2 5h16v12H9l-3 3v-3H2z" fill="#fff" />
              <path d="M4.500 8.500h11M4.500 11h11M4.500 13.500h7" stroke="#1c1e22" />
              <circle cx="17.500" cy="20" r="8" fill="#3d4043" stroke="#8b8d90" />
              <text x="17.500" y="24" fontSize="11" fontWeight="600" textAnchor="middle" fill="#fff" fontFamily="Open Sans">4</text>
            </svg>
          </TraySlot>
          <ShowDesktop />
        </Tray>
      </Taskbar>
    </Window>
  );
}
